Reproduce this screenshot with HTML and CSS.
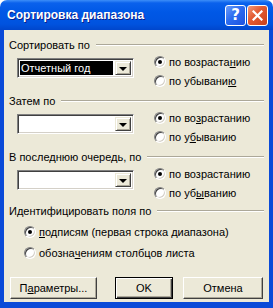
FILE: index.html
```html
<!DOCTYPE html>
<html lang="ru">
<head>
    <meta charset="UTF-8">
    <title>Сортировка диапазона</title>
    <link rel="stylesheet" href="styles.css">
</head>
<body>
    <div class="window">
        <div class="titlebar">
            <span class="title">Сортировка диапазона</span>
            <div class="caption-btns">
                <span class="cap-btn help">?</span>
                <span class="cap-btn close">
                    <svg width="11" height="11" viewBox="0 0 11 11">
                        <path d="M1.5 1.5 L9.5 9.5 M9.5 1.5 L1.5 9.5" stroke="#fff" stroke-width="2.2" stroke-linecap="square"/>
                    </svg>
                </span>
            </div>
        </div>

        <div class="client">
            <!-- Sort by -->
            <div class="group">
                <div class="group-head"><span>Сортировать по</span><i class="rule"></i></div>
                <div class="group-body">
                    <div class="combo">
                        <span class="combo-value selected">Отчетный год</span>
                        <span class="combo-arrow"></span>
                    </div>
                    <div class="radios">
                        <label class="radio-row"><span class="radio checked"></span>по возраста<u>н</u>ию</label>
                        <label class="radio-row"><span class="radio"></span>по убывани<u>ю</u></label>
                    </div>
                </div>
            </div>

            <!-- Then by -->
            <div class="group">
                <div class="group-head"><span>Затем по</span><i class="rule"></i></div>
                <div class="group-body">
                    <div class="combo">
                        <span class="combo-value"></span>
                        <span class="combo-arrow"></span>
                    </div>
                    <div class="radios">
                        <label class="radio-row"><span class="radio checked"></span>по во<u>з</u>растанию</label>
                        <label class="radio-row"><span class="radio"></span>по у<u>б</u>ыванию</label>
                    </div>
                </div>
            </div>

            <!-- Then by (last) -->
            <div class="group">
                <div class="group-head"><span>В последнюю очередь, по</span><i class="rule"></i></div>
                <div class="group-body">
                    <div class="combo">
                        <span class="combo-value"></span>
                        <span class="combo-arrow"></span>
                    </div>
                    <div class="radios">
                        <label class="radio-row"><span class="radio checked"></span>по возрастанию</label>
                        <label class="radio-row"><span class="radio"></span>по уб<u>ы</u>ванию</label>
                    </div>
                </div>
            </div>

            <!-- Header row -->
            <div class="group group-last">
                <div class="group-head"><span>Идентифицировать поля по</span><i class="rule"></i></div>
                <div class="group-list">
                    <label class="radio-row tall"><span class="radio checked"></span><u>п</u>одписям (первая строка диапазона)</label>
                    <label class="radio-row tall"><span class="radio"></span>обозна<u>ч</u>ениям столбцов листа</label>
                </div>
            </div>

            <div class="buttons">
                <button class="btn btn-options">П<u>а</u>раметры...</button>
                <button class="btn btn-ok default">OK</button>
                <button class="btn btn-cancel">Отмена</button>
            </div>
        </div>
    </div>
</body>
</html>
```

FILE: styles.css
```css
* {
    margin: 0;
    padding: 0;
    box-sizing: border-box;
}

html, body {
    background: #fff;
}

body {
    width: 273px;
    height: 308px;
    font-family: 'Liberation Sans', Arial, sans-serif;
    font-size: 11px;
    color: #000;
}

.window {
    width: 273px;
    height: 308px;
    display: flex;
    flex-direction: column;
    border-radius: 7px 7px 0 0;
    overflow: hidden;
}

/* title bar */
.titlebar {
    height: 30px;
    flex: none;
    display: flex;
    align-items: center;
    padding: 0 5px 0 7px;
    background: linear-gradient(#3d8ef8 0, #0a61ec 3px, #0058e6 40%, #0053df 80%, #0046cc 100%);
}

.title {
    flex: 1;
    color: #fff;
    font-weight: bold;
    font-size: 12px;
    text-shadow: 1px 1px #0a1f8a;
}

.caption-btns {
    display: flex;
    gap: 1px;
}

.cap-btn {
    width: 21px;
    height: 21px;
    border: 1px solid #fff;
    border-radius: 3px;
    display: flex;
    align-items: center;
    justify-content: center;
}

.help {
    background: linear-gradient(135deg, #6c9cf9 0%, #2c6cf0 45%, #1b52e0 100%);
    color: #fff;
    font-weight: bold;
    font-size: 15px;
    font-family: 'DejaVu Sans', sans-serif;
}

.close {
    background: linear-gradient(135deg, #f09a7a 0%, #e35c34 40%, #c8401a 100%);
}

/* dialog body */
.client {
    flex: 1;
    background: #ece9d8;
    border: 4px solid #0a4ad8;
    border-top: 0;
    border-bottom-width: 6px;
    padding: 8px 5px 0 5px;
    display: flex;
    flex-direction: column;
}

.group + .group {
    margin-top: 4px;
}

.group-last {
    margin-top: 2px !important;
}

.group-head {
    height: 14px;
    display: flex;
    align-items: center;
    gap: 6px;
    white-space: nowrap;
}

.rule {
    flex: 1;
    height: 2px;
    border-top: 1px solid #aca899;
    border-bottom: 1px solid #fff;
}

.group-body {
    display: flex;
    align-items: flex-start;
    padding-left: 8px;
}

/* combo box */
.combo {
    width: 117px;
    height: 20px;
    margin-top: 6px;
    margin-right: 20px;
    display: flex;
    align-items: stretch;
    background: #fff;
    border: 1px solid;
    border-color: #808080 #fff #fff #808080;
    box-shadow: inset 1px 1px #404040, inset -1px -1px #d4d0c8;
    padding: 2px;
}

.combo-value {
    flex: 1;
    line-height: 14px;
    padding-left: 1px;
}

.combo-value.selected {
    background: #000;
    color: #fff;
    margin-right: 2px;
}

.combo-arrow {
    width: 16px;
    background: #ece9d8;
    border: 1px solid;
    border-color: #ece9d8 #404040 #404040 #ece9d8;
    box-shadow: inset 1px 1px #fff, inset -1px -1px #aca899;
    position: relative;
}

.combo-arrow::after {
    content: "";
    position: absolute;
    left: 3px;
    top: 5px;
    border-left: 4px solid transparent;
    border-right: 4px solid transparent;
    border-top: 4px solid #000;
}

/* radio buttons */
.radios {
    display: flex;
    flex-direction: column;
}

.radio-row {
    height: 19px;
    display: flex;
    align-items: center;
    white-space: nowrap;
}

.radio-row.tall {
    height: 21px;
}

.radio {
    width: 12px;
    height: 12px;
    margin-right: 3px;
    border-radius: 50%;
    background: #fff;
    border: 1px solid;
    border-color: #808080 #fff #fff #808080;
    box-shadow: inset 1px 1px #404040, inset -1px -1px #d4d0c8;
    display: flex;
    align-items: center;
    justify-content: center;
}

.radio.checked::after {
    content: "";
    width: 4px;
    height: 4px;
    border-radius: 50%;
    background: #000;
}

.group-list {
    margin-top: 3px;
    padding-left: 15px;
    display: flex;
    flex-direction: column;
}

/* push buttons */
.buttons {
    margin-top: 14px;
    padding-left: 1px;
    display: flex;
}

.btn {
    height: 22px;
    font-family: inherit;
    font-size: 11px;
    color: #000;
    background: #ece9d8;
    border: 1px solid;
    border-color: #fff #404040 #404040 #fff;
    box-shadow: inset -1px -1px #aca899;
}

.btn-options {
    width: 87px;
}

.btn-ok {
    width: 58px;
    margin-left: 18px;
}

.btn-cancel {
    width: 80px;
    margin-left: 10px;
}

.btn.default {
    border: 1px solid #000;
    box-shadow: inset 1px 1px #fff, inset -1px -1px #404040, inset -2px -2px #aca899;
}
```
